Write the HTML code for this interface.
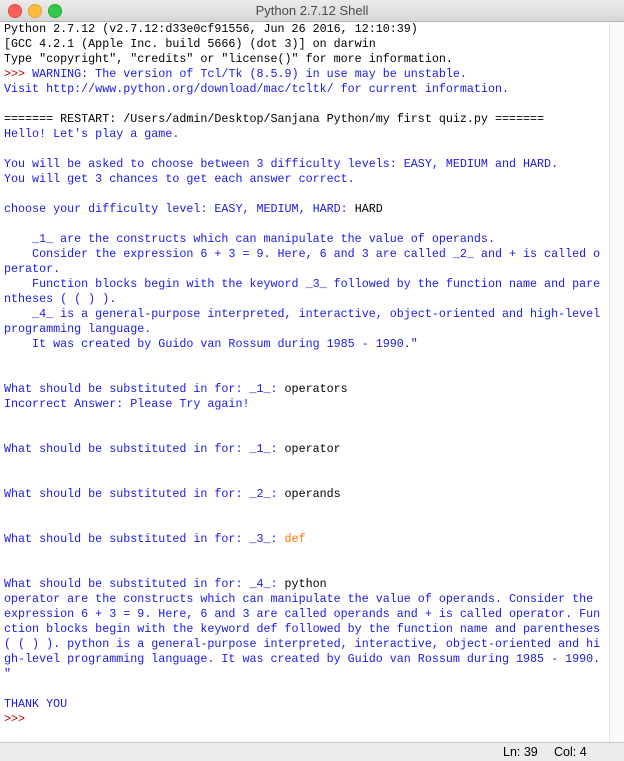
<!DOCTYPE html>
<html><head><meta charset="utf-8"><style>
html,body{margin:0;padding:0;}
body{width:624px;height:760px;overflow:hidden;background:#fff;position:relative;font-family:"Liberation Sans",sans-serif;}
.title{position:absolute;left:0;top:0;width:624px;height:21px;background:linear-gradient(#ececec,#d6d6d6);border-bottom:1px solid #b4b4b4;text-align:center;font-size:13px;line-height:21px;color:#4a4a4a;}
.dot{position:absolute;top:4px;width:12px;height:12px;border-radius:50%;}
pre{position:absolute;left:4px;top:22px;margin:0;font-family:"Liberation Mono",monospace;font-size:11.7px;line-height:15px;color:#000;}
.b{color:#1a1ae6;}
.r{color:#c00000;}
.o{color:#ff7700;}
.sb{position:absolute;left:609px;top:22px;width:15px;height:720px;background:#fafafa;border-left:1px solid #e6e6e6;}
.status{position:absolute;left:0;top:742px;width:624px;height:18px;background:#ececec;border-top:1px solid #c8c8c8;font-size:12.5px;line-height:18px;}
</style></head><body>
<div class="title">
<div class="dot" style="left:8px;background:#fc605c;border:0.5px solid #de4a45"></div>
<div class="dot" style="left:28px;background:#fdbc40;border:0.5px solid #dea234"></div>
<div class="dot" style="left:48px;background:#34c84a;border:0.5px solid #27aa35"></div>
Python 2.7.12 Shell</div>
<div class="sb"></div>
<pre>Python 2.7.12 (v2.7.12:d33e0cf91556, Jun 26 2016, 12:10:39)
[GCC 4.2.1 (Apple Inc. build 5666) (dot 3)] on darwin
Type "copyright", "credits" or "license()" for more information.
<span class="r">&gt;&gt;&gt; </span><span class="b">WARNING: The version of Tcl/Tk (8.5.9) in use may be unstable.
Visit http://www.python.org/download/mac/tcltk/ for current information.</span>

======= RESTART: /Users/admin/Desktop/Sanjana Python/my first quiz.py =======
<span class="b">Hello! Let's play a game.

You will be asked to choose between 3 difficulty levels: EASY, MEDIUM and HARD.
You will get 3 chances to get each answer correct.

choose your difficulty level: EASY, MEDIUM, HARD: </span>HARD
<span class="b">
    _1_ are the constructs which can manipulate the value of operands.
    Consider the expression 6 + 3 = 9. Here, 6 and 3 are called _2_ and + is called o
perator.
    Function blocks begin with the keyword _3_ followed by the function name and pare
ntheses ( ( ) ).
    _4_ is a general-purpose interpreted, interactive, object-oriented and high-level
programming language.
    It was created by Guido van Rossum during 1985 - 1990."


What should be substituted in for: _1_: </span>operators
<span class="b">Incorrect Answer: Please Try again!


What should be substituted in for: _1_: </span>operator


<span class="b">What should be substituted in for: _2_: </span>operands


<span class="b">What should be substituted in for: _3_: </span><span class="o">def</span>


<span class="b">What should be substituted in for: _4_: </span>python
<span class="b">operator are the constructs which can manipulate the value of operands. Consider the
expression 6 + 3 = 9. Here, 6 and 3 are called operands and + is called operator. Fun
ction blocks begin with the keyword def followed by the function name and parentheses
( ( ) ). python is a general-purpose interpreted, interactive, object-oriented and hi
gh-level programming language. It was created by Guido van Rossum during 1985 - 1990.
"

THANK YOU</span>
<span class="r">&gt;&gt;&gt;</span> </pre>
<div class="status"><span style="position:absolute;left:503px;">Ln: 39</span><span style="position:absolute;left:554px;">Col: 4</span></div>
</body></html>
